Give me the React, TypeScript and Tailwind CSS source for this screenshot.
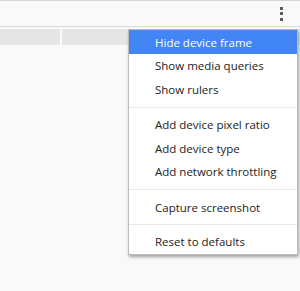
import React from "react";

const Item = ({ label, active }: { label: string; active?: boolean }) => (
  <div
    className={`h-[23.5px] flex items-center pl-[26px] pt-px text-[11.5px] leading-none ${
      active ? "bg-[#4285f4] text-white" : "text-[#222]"
    }`}
  >
    {label}
  </div>
);

const Sep = ({ last }: { last?: boolean }) => (
  <div className={`${last ? "mt-[5px] mb-[5px]" : "mt-[6px] mb-[5px]"} h-px bg-[#e8e8e8]`} />
);

export default function App() {
  return (
    <div
      className="relative w-[300px] h-[291px] bg-[#f9f9f9] overflow-hidden"
      style={{ fontFamily: '"Open Sans", "Noto Sans", sans-serif' }}
    >
      <div className="h-px bg-[#d6d6d6]" />
      <div className="h-[26px] flex items-center justify-end pr-[17px] border-b border-[#dadada]">
        <div className="flex flex-col gap-[2.5px]">
          <div className="w-[3px] h-[3px] bg-[#5a5a5a]" />
          <div className="w-[3px] h-[3px] bg-[#5a5a5a]" />
          <div className="w-[3px] h-[3px] bg-[#5a5a5a]" />
        </div>
      </div>
      <div className="mt-[2px] h-[16px] flex">
        <div className="w-[60px] bg-[#e5e5e5]" />
        <div className="w-[2px] bg-[#fafafa]" />
        <div className="flex-1 bg-[#e5e5e5]" />
      </div>
      <div className="absolute left-[128px] top-[29px] w-[170px] bg-white border border-[#bbb] shadow-[1px_2px_3px_rgba(0,0,0,0.35)] pb-px">
        <Item label="Hide device frame" active />
        <Item label="Show media queries" />
        <Item label="Show rulers" />
        <Sep />
        <Item label="Add device pixel ratio" />
        <Item label="Add device type" />
        <Item label="Add network throttling" />
        <Sep />
        <Item label="Capture screenshot" />
        <Sep last />
        <Item label="Reset to defaults" />
      </div>
    </div>
  );
}
